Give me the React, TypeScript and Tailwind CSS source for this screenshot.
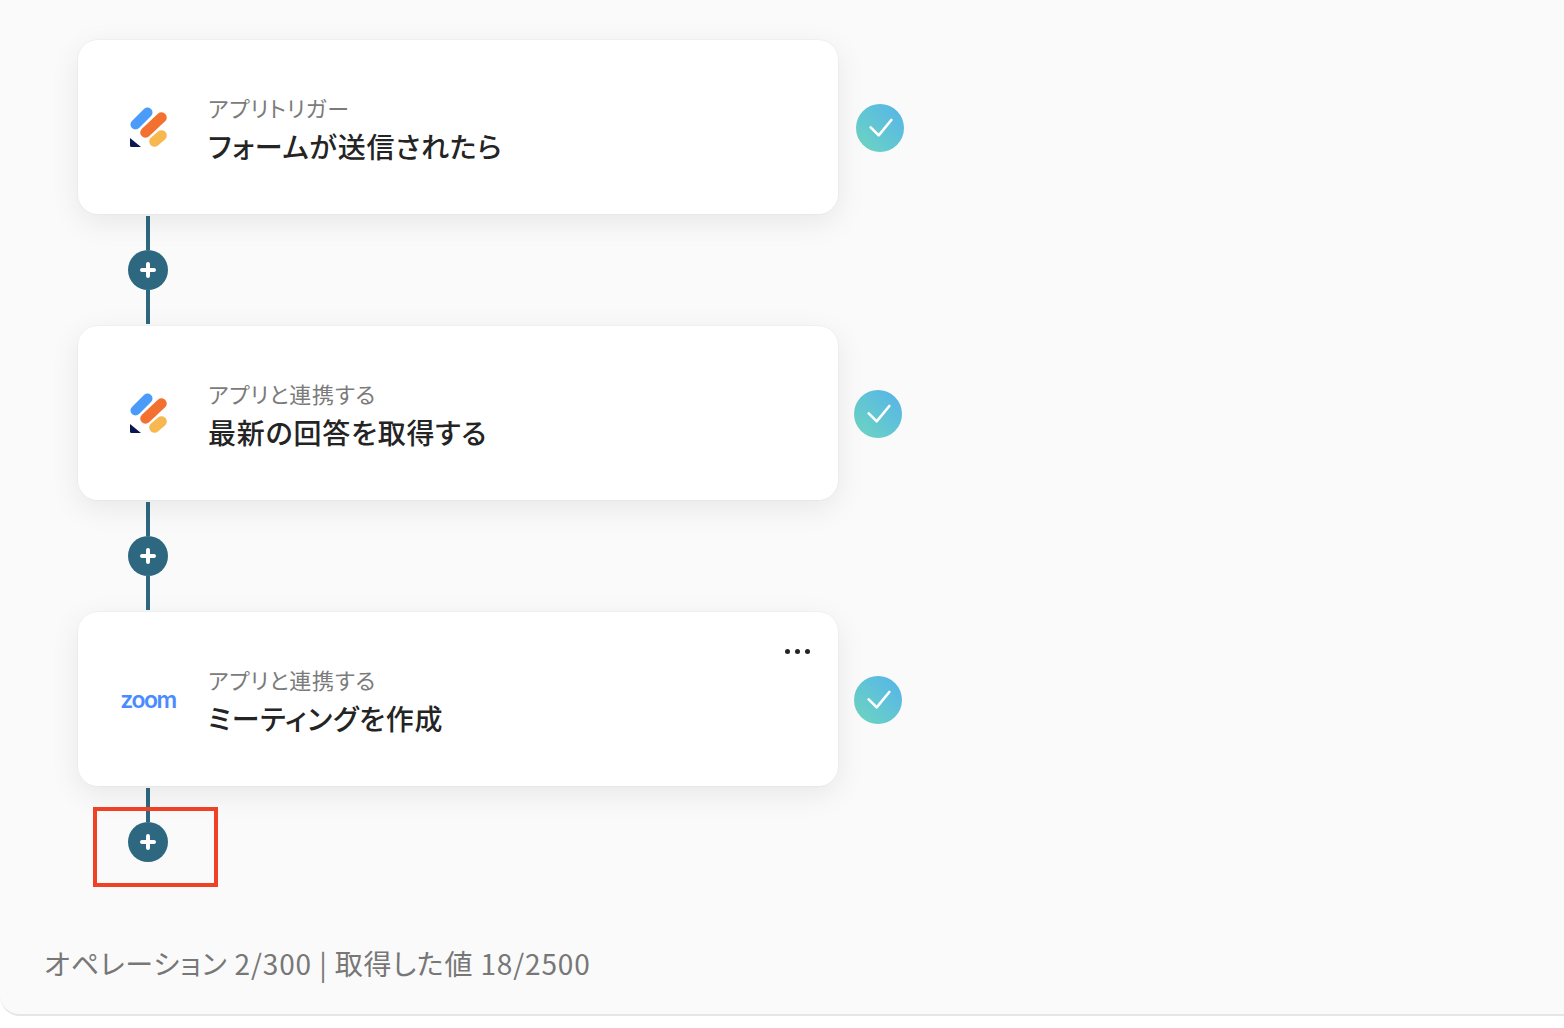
import React from 'react';

const FormLogo = () => (
  <svg width="40" height="42" viewBox="-1 0 40 42" fill="none">
    <line x1="6.5" y1="17.5" x2="18.5" y2="5.5" stroke="#4A9CF8" strokeWidth="10" strokeLinecap="round" />
    <line x1="16.5" y1="25.5" x2="32.5" y2="10.5" stroke="#F27030" strokeWidth="10.5" strokeLinecap="round" />
    <line x1="25.5" y1="34.5" x2="32.5" y2="28.5" stroke="#F6B84F" strokeWidth="10.5" strokeLinecap="round" />
    <path d="M1 31 L1 38.5 Q1 40 2.5 40 L12 40 Z" fill="#0C1650" />
  </svg>
);

const ZoomLogo = () => (
  <span className="text-[23px] leading-none font-semibold tracking-[-1.5px] text-[#4a8cff] font-['Inter',sans-serif]">
    zoom
  </span>
);

const Check = ({ offset }: { offset: string }) => (
  <div className={`${offset} mt-[2px] w-12 h-12 rounded-full bg-gradient-to-tr from-[#6fd6bd] to-[#56b2ea] flex items-center justify-center`}>
    <svg width="26" height="26" viewBox="0 0 26 26" fill="none">
      <path d="M3.7 12.3 L11.7 20.3 L24.3 5" stroke="#fff" strokeWidth="2.6" strokeLinecap="round" strokeLinejoin="round" />
    </svg>
  </div>
);

const PlusButton = () => (
  <div className="w-10 h-10 rounded-full bg-[#2d6880] flex items-center justify-center shrink-0">
    <svg width="16" height="16" viewBox="0 0 16 16" fill="none">
      <path d="M8 2 V14 M2 8 H14" stroke="#fff" strokeWidth="4" strokeLinecap="round" />
    </svg>
  </div>
);

const Connector = () => (
  <div className="w-10 ml-[50px] h-[112px] py-[2px] flex flex-col items-center">
    <div className="w-1 flex-1 bg-[#2d6880]" />
    <PlusButton />
    <div className="w-1 h-[34px] bg-[#2d6880]" />
  </div>
);

type StepProps = {
  logo: React.ReactNode;
  label: string;
  title: string;
  checkOffset: string;
  menu?: boolean;
};

const Step = ({ logo, label, title, checkOffset, menu }: StepProps) => (
  <div className="flex items-center">
    <div className="relative w-[760px] h-[174px] bg-white rounded-[20px] shadow-[0_0_0_1px_rgba(0,0,0,0.025),0_8px_30px_rgba(0,0,0,0.08)] flex items-center">
      <div className="w-[130px] pl-[10px] pt-[2px] flex justify-center shrink-0">{logo}</div>
      <div className="flex flex-col pt-[3px] tracking-[0.8px] [font-feature-settings:'palt']">
        <span className="text-[22px] leading-[30px] text-[#7b7b7b]">{label}</span>
        <span className="text-[28px] leading-[40px] font-[550] text-[#242424] mt-[4px]">{title}</span>
      </div>
      {menu && (
        <div className="absolute right-[28px] top-[37px] flex gap-[5px]">
          <span className="w-[5px] h-[5px] rounded-full bg-[#242424]" />
          <span className="w-[5px] h-[5px] rounded-full bg-[#242424]" />
          <span className="w-[5px] h-[5px] rounded-full bg-[#242424]" />
        </div>
      )}
    </div>
    <Check offset={checkOffset} />
  </div>
);

export default function App() {
  return (
    <div className="h-[1028px] bg-white font-['Noto_Sans_CJK_JP','Noto_Sans',sans-serif]">
      <div className="relative h-[1016px] bg-[#fafafa] border-b-2 border-[#e6e6e6] rounded-bl-[20px] pt-[40px] pl-[78px] flex flex-col overflow-hidden">
        <Step logo={<FormLogo />} label="アプリトリガー" title="フォームが送信されたら" checkOffset="ml-[18px]" />
        <Connector />
        <Step logo={<FormLogo />} label="アプリと連携する" title="最新の回答を取得する" checkOffset="ml-[16px]" />
        <Connector />
        <Step logo={<ZoomLogo />} label="アプリと連携する" title="ミーティングを作成" checkOffset="ml-[16px]" menu />
        <div className="w-10 ml-[50px] pt-[2px] flex flex-col items-center">
          <div className="w-1 h-[34px] bg-[#2d6880]" />
          <PlusButton />
        </div>
        <p className="mt-[81px] -ml-[34px] text-[28px] leading-[40px] tracking-[0.85px] text-[#777777] [font-feature-settings:'palt']">オペレーション 2/300 | 取得した値 18/2500</p>
        <div className="absolute left-[93px] top-[807px] w-[125px] h-[80px] border-[4px] border-[#ee4125]" />
      </div>
    </div>
  );
}
